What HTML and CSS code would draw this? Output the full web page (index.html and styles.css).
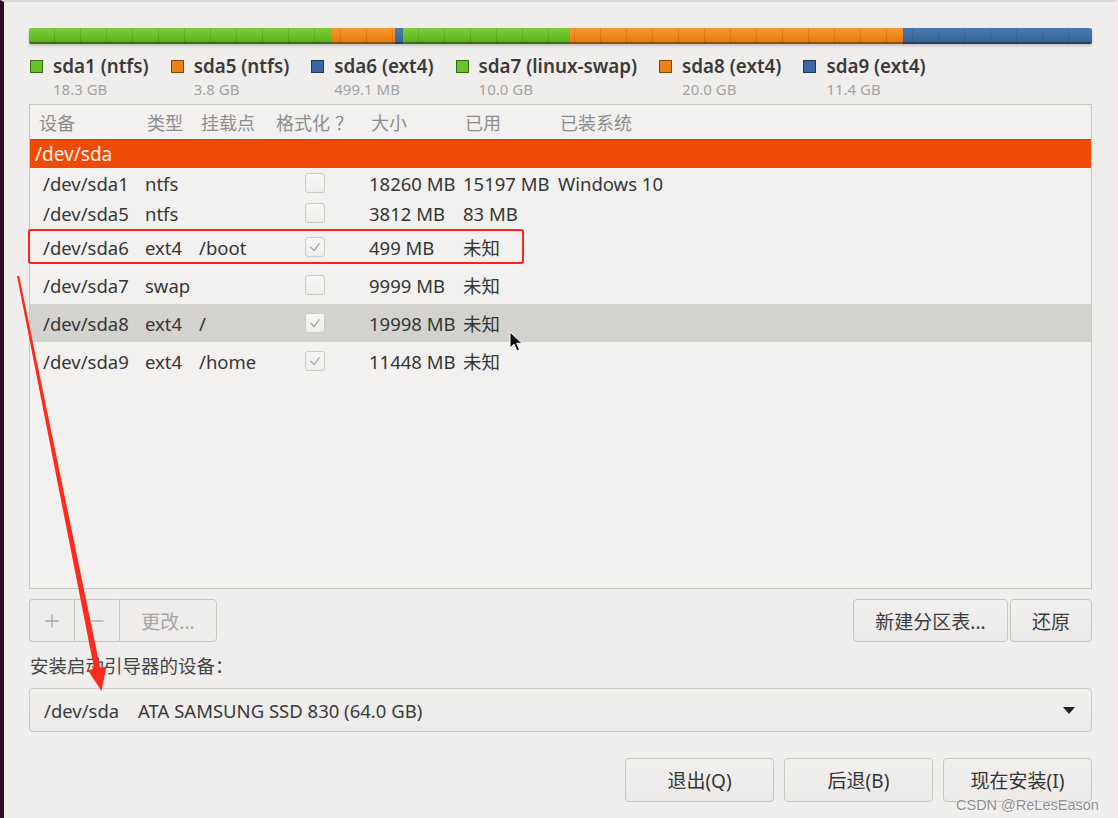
FILE: index.html
```html
<!DOCTYPE html>
<html lang="zh-CN">
<head>
<meta charset="utf-8">
<title>分区</title>
<link rel="stylesheet" href="styles.css">
</head>
<body>
<div class="window">
  <div class="content">
    <div class="partbar">
      <div class="seg green" style="width:303px"></div>
      <div class="seg orange" style="width:63px"></div>
      <div class="seg blue" style="width:8px"></div>
      <div class="seg green" style="width:167px"></div>
      <div class="seg orange" style="width:333px"></div>
      <div class="seg blue" style="width:189px"></div>
    </div>

    <div class="legend">
      <div class="legend-item"><span class="swatch green"></span><div class="legend-text"><div class="legend-name">sda1 (ntfs)</div><div class="legend-size">18.3 GB</div></div></div>
      <div class="legend-item"><span class="swatch orange"></span><div class="legend-text"><div class="legend-name">sda5 (ntfs)</div><div class="legend-size">3.8 GB</div></div></div>
      <div class="legend-item"><span class="swatch blue"></span><div class="legend-text"><div class="legend-name">sda6 (ext4)</div><div class="legend-size">499.1 MB</div></div></div>
      <div class="legend-item"><span class="swatch green"></span><div class="legend-text"><div class="legend-name">sda7 (linux-swap)</div><div class="legend-size">10.0 GB</div></div></div>
      <div class="legend-item"><span class="swatch orange"></span><div class="legend-text"><div class="legend-name">sda8 (ext4)</div><div class="legend-size">20.0 GB</div></div></div>
      <div class="legend-item"><span class="swatch blue"></span><div class="legend-text"><div class="legend-name">sda9 (ext4)</div><div class="legend-size">11.4 GB</div></div></div>
    </div>

    <div class="table">
      <div class="thead cols">
        <div class="th first">设备</div>
        <div class="th">类型</div>
        <div class="th">挂载点</div>
        <div class="th">格式化<span class="fw">？</span></div>
        <div class="th">大小</div>
        <div class="th">已用</div>
        <div class="th">已装系统</div>
      </div>
      <div class="disk-row">/dev/sda</div>
      <div class="row cols">
        <div class="td first">/dev/sda1</div><div class="td">ntfs</div><div class="td"></div>
        <div class="td chk"><span class="check"></span></div>
        <div class="td">18260 MB</div><div class="td">15197 MB</div><div class="td">Windows 10</div>
      </div>
      <div class="row cols">
        <div class="td first">/dev/sda5</div><div class="td">ntfs</div><div class="td"></div>
        <div class="td chk"><span class="check"></span></div>
        <div class="td">3812 MB</div><div class="td">83 MB</div><div class="td"></div>
      </div>
      <div class="row cols tall">
        <div class="td first">/dev/sda6</div><div class="td">ext4</div><div class="td">/boot</div>
        <div class="td chk"><span class="check"><svg viewBox="0 0 20 20" width="20" height="20"><polyline points="5,10 9,14 15,6" /></svg></span></div>
        <div class="td">499 MB</div><div class="td">未知</div><div class="td"></div>
      </div>
      <div class="row cols tall">
        <div class="td first">/dev/sda7</div><div class="td">swap</div><div class="td"></div>
        <div class="td chk"><span class="check"></span></div>
        <div class="td">9999 MB</div><div class="td">未知</div><div class="td"></div>
      </div>
      <div class="row cols tall selected">
        <div class="td first">/dev/sda8</div><div class="td">ext4</div><div class="td">/</div>
        <div class="td chk"><span class="check"><svg viewBox="0 0 20 20" width="20" height="20"><polyline points="5,10 9,14 15,6" /></svg></span></div>
        <div class="td">19998 MB</div><div class="td">未知</div><div class="td"></div>
      </div>
      <div class="row cols tall">
        <div class="td first">/dev/sda9</div><div class="td">ext4</div><div class="td">/home</div>
        <div class="td chk"><span class="check"><svg viewBox="0 0 20 20" width="20" height="20"><polyline points="5,10 9,14 15,6" /></svg></span></div>
        <div class="td">11448 MB</div><div class="td">未知</div><div class="td"></div>
      </div>
    </div>

    <div class="toolbar">
      <div class="btn-group">
        <button class="btn icon-btn" disabled><svg viewBox="0 0 16 16" width="16" height="16"><path d="M8 1.5V14.5M1.5 8H14.5" /></svg></button>
        <button class="btn icon-btn" disabled><svg viewBox="0 0 16 16" width="16" height="16"><path d="M1.5 8H14.5" /></svg></button>
        <button class="btn change-btn" disabled>更改...</button>
      </div>
      <div class="btn-group right">
        <button class="btn newtable-btn">新建分区表...</button>
        <button class="btn revert-btn">还原</button>
      </div>
    </div>

    <div class="boot-label">安装启动引导器的设备：</div>

    <div class="combo">
      <span class="combo-dev">/dev/sda</span>
      <span class="combo-name">ATA SAMSUNG SSD 830 (64.0 GB)</span>
      <svg class="combo-arrow" viewBox="0 0 12 7" width="12" height="7"><path d="M0 0H12L6 7Z" /></svg>
    </div>

    <div class="actions">
      <button class="btn action">退出(Q)</button>
      <button class="btn action">后退(B)</button>
      <button class="btn action">现在安装(I)</button>
    </div>
  </div>

  <div class="annot-box"></div>

  <svg class="annot-arrow" viewBox="0 0 1118 818" width="1118" height="818">
    <polygon points="17,276 19.2,276 100.8,671 94.8,672" />
    <polygon points="88,670.5 106.5,666.5 101.5,691" />
  </svg>

  <svg class="cursor" viewBox="0 0 14 22" width="14" height="22">
    <path d="M1 1V17L5 13.2L8 20L10.6 18.8L7.7 12.3H13Z" />
  </svg>

  <div class="watermark">CSDN @ReLesEason</div>
</div>
</body>
</html>
```

FILE: styles.css
```css
html, body {
  margin: 0;
  padding: 0;
}

body {
  background: #efeeec;
  font-family: "Noto Sans", "Noto Sans CJK SC", sans-serif;
  color: #3a3a3a;
}

.window {
  position: relative;
  width: 1118px;
  height: 818px;
  box-sizing: border-box;
  border-left: 4px solid #2b0c24;
  border-right: 5px solid #f3e8ed;
  border-top: 2px solid #d9d8d6;
  padding: 26px 0 0 25px;
  overflow: hidden;
  background: #efeeec;
}

.content {
  width: 1063px;
}

/* partition bar */
.partbar {
  position: relative;
  display: flex;
  height: 16px;
  border-radius: 2px;
  overflow: hidden;
  box-shadow: 0 2px 3px rgba(0, 0, 0, 0.18);
}

.partbar::after {
  content: "";
  position: absolute;
  inset: 0;
  background: repeating-linear-gradient(90deg, transparent 0 25px, rgba(0, 0, 0, 0.1) 25px 26px);
  border-bottom: 2px solid rgba(0, 0, 0, 0.35);
}

.seg {
  height: 100%;
}

.seg.green {
  background: linear-gradient(#7dcd3a, #66bd27 60%, #58a81d);
}

.seg.orange {
  background: linear-gradient(#f69a30, #ef8519 60%, #e07410);
}

.seg.blue {
  background: linear-gradient(#4a79ae, #3e6ca1 60%, #345d90);
}

/* legend */
.legend {
  display: flex;
  gap: 22px;
  margin-top: 12px;
  padding-left: 1px;
}

.legend-item {
  display: flex;
  align-items: flex-start;
  gap: 10px;
}

.swatch {
  width: 11px;
  height: 11px;
  margin-top: 4px;
  border: 1px solid rgba(0, 0, 0, 0.45);
  flex: none;
}

.swatch.green { background: #68c22a; }
.swatch.orange { background: #f07f17; }
.swatch.blue { background: #3b68a3; }

.legend-name {
  font-size: 18.8px;
  line-height: 21px;
  font-weight: 600;
  color: #3a3a3a;
  white-space: nowrap;
}

.legend-size {
  font-size: 15px;
  line-height: 24px;
  color: #a3a3a3;
}

/* table */
.table {
  margin-top: 3px;
  height: 485px;
  box-sizing: border-box;
  border: 1px solid #c9c8c5;
  background: #f2f1ef;
}

.cols {
  display: grid;
  grid-template-columns: 111px 54px 75px 95px 94px 95px 1fr;
  align-items: center;
}

.thead {
  height: 34px;
  font-size: 18px;
  color: #8d8d8d;
  font-family: "Noto Sans CJK SC", sans-serif;
}

.th {
  padding-left: 6px;
  white-space: nowrap;
}

.th.first {
  padding-left: 9px;
}

.fw {
  display: inline-block;
  margin-left: 5px;
}

.disk-row {
  height: 29px;
  box-sizing: border-box;
  line-height: 28px;
  padding-left: 5px;
  background: #f04b06;
  border-top: 1px solid #d84000;
  color: #fff2ea;
  font-size: 19px;
}

.row {
  height: 30px;
  font-size: 18.5px;
  color: #363636;
}

.row.tall {
  height: 38px;
}

.row.selected {
  background: #d3d2cf;
}

.td {
  padding-left: 4px;
  white-space: nowrap;
}

.td.first {
  padding-left: 13px;
}

.td.chk {
  padding-left: 35px;
  display: flex;
  align-items: center;
}

.check {
  width: 20px;
  height: 20px;
  box-sizing: border-box;
  border: 1px solid #cbcac7;
  border-radius: 3px;
  background: linear-gradient(#f7f7f5, #efeeec);
  display: flex;
  align-items: center;
  justify-content: center;
}

.check svg {
  display: block;
  fill: none;
  stroke: #a2a2a0;
  stroke-width: 1.4;
}

/* toolbar */
.toolbar {
  margin-top: 10px;
  display: flex;
  justify-content: space-between;
  align-items: flex-start;
}

.btn-group {
  display: flex;
}

.btn-group.right {
  gap: 2px;
}

.btn {
  font-family: "Noto Sans", "Noto Sans CJK SC", sans-serif;
  background: linear-gradient(#f1f0ee, #ebeae8);
  border: 1px solid #c6c5c2;
  border-radius: 4px;
  color: #3c3c3c;
  font-size: 19px;
  height: 43px;
  padding: 0;
  margin: 0;
  display: flex;
  align-items: center;
  justify-content: center;
}

.btn[disabled] {
  color: #a5a5a5;
  background: #eeedeb;
}

.btn-group .icon-btn {
  width: 45px;
  border-radius: 0;
  border-right: none;
}

.btn-group .icon-btn:first-child {
  border-radius: 4px 0 0 4px;
}

.icon-btn svg {
  fill: none;
  stroke: #a5a5a5;
  stroke-width: 1.3;
}

.change-btn {
  width: 98px;
  border-radius: 0 4px 4px 0;
}

.newtable-btn {
  width: 155px;
}

.revert-btn {
  width: 82px;
}

.boot-label {
  margin-top: 12px;
  height: 24px;
  line-height: 24px;
  font-size: 18.5px;
  color: #454545;
  padding-left: 1px;
}

.combo {
  margin-top: 10px;
  height: 44px;
  box-sizing: border-box;
  border: 1px solid #c9c8c5;
  border-radius: 4px;
  background: linear-gradient(#f1f0ee, #ecebe9);
  display: flex;
  align-items: center;
  padding-left: 14px;
  padding-right: 16px;
  font-size: 18.5px;
  color: #3a3a3a;
}

.combo-dev {
  width: 94px;
}

.combo-arrow {
  margin-left: auto;
  fill: #222;
}

.actions {
  margin-top: 26px;
  display: flex;
  justify-content: flex-end;
  gap: 10px;
}

.action {
  width: 149px;
  height: 44px;
  font-size: 19px;
  color: #333;
}

/* annotations */
.annot-box {
  position: absolute;
  left: 24px;
  top: 227px;
  width: 492px;
  height: 31px;
  border: 2px solid #ff1f1f;
  border-radius: 3px;
}

.annot-arrow {
  position: absolute;
  left: -4px;
  top: -2px;
  fill: #ff2a1c;
}

.cursor {
  position: absolute;
  left: 505px;
  top: 329px;
  fill: #111;
  stroke: #fff;
  stroke-width: 1;
}

.watermark {
  position: absolute;
  left: 952px;
  top: 795px;
  font-family: "Liberation Sans", sans-serif;
  font-size: 14.5px;
  color: #8e8e8e;
  text-shadow: 0 0 2px #fff, 0 0 1px #fff;
}
```
